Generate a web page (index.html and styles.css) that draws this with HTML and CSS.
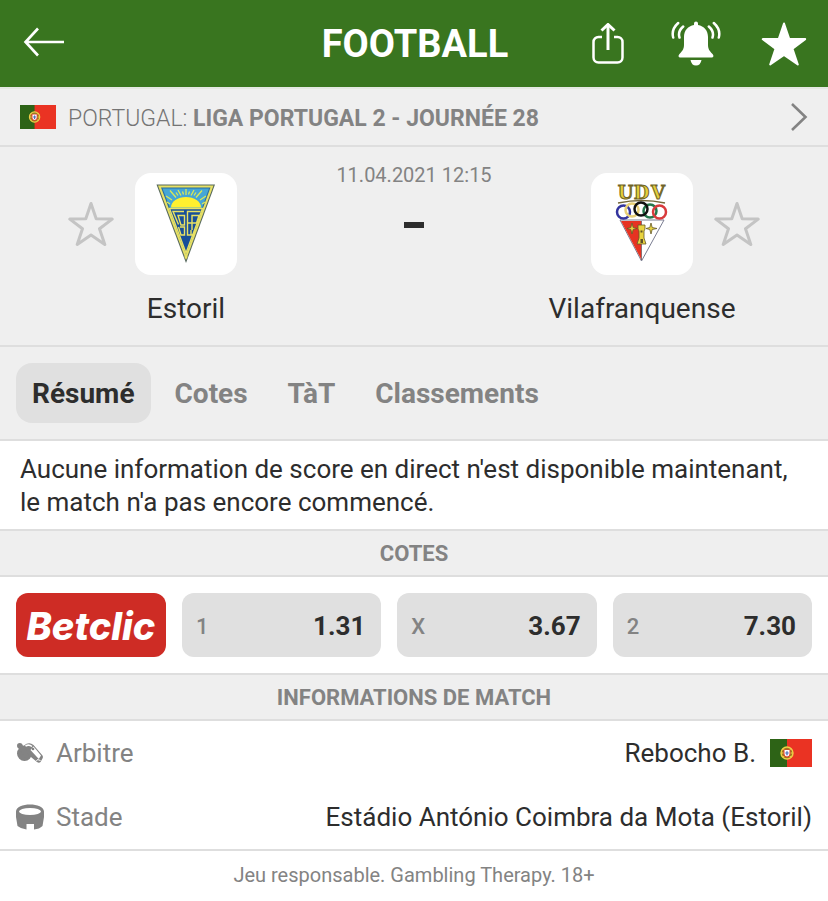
FILE: index.html
```html
<!DOCTYPE html>
<html lang="fr">
<head>
<meta charset="utf-8">
<meta name="viewport" content="width=device-width, initial-scale=1">
<title>Estoril - Vilafranquense</title>
<link rel="stylesheet" href="styles.css">
</head>
<body>
<svg class="defs" aria-hidden="true">
  <symbol id="flag" viewBox="0 0 42 28">
    <path fill="#ea3323" d="M0 0h42v28H0z"/><path fill="#2d6316" d="M0 0h17v28H0z"/>
    <circle cx="17" cy="14" r="6" fill="#9a7a20" stroke="#f0cf48" stroke-width="1.4"/>
    <path d="M11 14h12M13 10q4 4 8 0M13 18q4-4 8 0" fill="none" stroke="#f0cf48"/>
    <path d="M13.500 10.500h7v4q0 3.500-3.500 4-3.500-.5-3.500-4z" fill="#e33a2a"/>
    <path d="M14.500 11h5v4q0 2-2.500 2.500-2.500-.5-2.500-2.500z" fill="#fff"/>
    <path d="M16.300 12.200h1.400v4h-1.400zM15.200 13.400h3.600v1.200h-3.600z" fill="#5570b8"/>
  </symbol>
  <symbol id="star" viewBox="0 0 46 46">
    <path d="M23 2.500l5.200 15.300 16 .3-12.700 9.700L36.800 43.500 23 34 9.200 43.500l5.300-15.700L1.800 18.100l16-.3z" stroke-linejoin="round"/>
  </symbol>
</svg>

<header class="topbar">
  <div class="topbar-side">
    <button class="icon-button" aria-label="Retour">
      <svg width="42" height="30" viewBox="0 0 42 30" fill="none" stroke="#fff" stroke-width="2.600"><path d="M41 15H2M15 1.500L2.500 15 15 28.500"/></svg>
    </button>
  </div>
  <h1>FOOTBALL</h1>
  <div class="topbar-side actions">
    <button class="icon-button" aria-label="Partager">
      <svg width="32" height="42" viewBox="0 0 32 42" fill="none" stroke="#fff" stroke-width="2.500"><path d="M10 14H6.500a5 5 0 0 0-5 5v15.500a5 5 0 0 0 5 5h19a5 5 0 0 0 5-5V19a5 5 0 0 0-5-5H22"/><path d="M16 27V2" stroke-width="3"/><path d="M9.500 7.500L16 1.500l6.500 6" stroke-width="3"/></svg>
    </button>
    <button class="icon-button" aria-label="Notifications">
      <svg width="50" height="46" viewBox="0 1 50 46" fill="#fff"><path d="M23 3.500a2 2 0 0 1 4 0V5c6 1 10 5.500 10 12v7.500c0 4 1 6 4.500 9.500 1.800 2 .8 3.500-1 3.500h-31c-1.800 0-2.800-1.500-1-3.500 3.500-3.500 4.500-5.500 4.500-9.500V17c0-6.500 4-11 10-12zM19.500 40h11q-1 5.500-5.500 5.500T19.500 40z"/><path d="M7.200 3Q0 9.500 2.200 17.500M12.200 6.500Q6.500 11.500 8.500 17.500M42.800 3Q50 9.500 47.800 17.500M37.800 6.500q5.700 5 3.700 11" fill="none" stroke="#fff" stroke-width="2.500" stroke-linecap="round"/></svg>
    </button>
    <button class="icon-button" aria-label="Favori">
      <svg width="46" height="46" fill="#fff" stroke="#fff" stroke-width="2"><use href="#star"/></svg>
    </button>
  </div>
</header>

<main>
  <a class="league" href="#">
    <svg class="league-flag" aria-label="Portugal"><use href="#flag"/></svg>
    <span class="league-name">PORTUGAL: <strong>LIGA PORTUGAL 2 - JOURNÉE 28</strong></span>
    <svg width="18" height="28" viewBox="0 0 18 28" fill="none" stroke="#838383" stroke-width="2.600"><path d="M2 1l13.500 13L2 27"/></svg>
  </a>

  <section class="match">
    <div class="team">
      <button class="icon-button favourite" aria-label="Suivre Estoril">
        <svg width="46" height="46" fill="none" stroke="#c4c4c4" stroke-width="3"><use href="#star"/></svg>
      </button>
      <div class="badge">
        <svg width="102" height="102" viewBox="0 0 102 102">
          <path d="M21.500 11.500H80L51 90z" fill="#56685c"/>
          <path d="M23 12.500h55.500L51 87z" fill="#e8e164"/>
          <path d="M26 14.500h49.500L51 81.500z" fill="#2b6d9d"/>
          <path d="M27.500 15.500H74L67 35H35z" fill="#45a6d6"/>
          <path d="M36 34.500a15 10.500 0 0 1 30 0z" fill="#fff02f"/>
          <g stroke="#d9e957" stroke-width="1.300"><path d="M51 22v-6M46 22.500l-3-5.500M56 22.500l3-5.500M41 24.500l-6-7M61 24.500l6-7M37 27l-6-4M65 27l6-4M48.500 21.500l-1-3M53.500 21.500l1-3M35 31l-3-2M67 31l3-2M43 22.500l-2-3M59 22.500l2-3"/></g>
          <path d="M34.500 35.500h33L51 80z" fill="#174f99" stroke="#e8e164" stroke-width="1.400"/>
          <path d="M49 38.500H38l5.500 13M43 42.500h6.500V52H46zM45 54h4.500v8h-3.500l-2.500-8M65.500 38.500H52.500V62H58l2.500-5M52.500 50H57M64 42.500h-7V57M57 42.500h7l-2.500 7.500H57M56 57v5" fill="none" stroke="#e8e164" stroke-width="1.400"/>
          <circle cx="51" cy="84" r="1.500" fill="#e8e164"/>
        </svg>
      </div>
      <h2>Estoril</h2>
    </div>

    <div class="score">
      <time datetime="2021-04-11T12:15">11.04.2021 12:15</time>
      <span class="dash" role="img" aria-label="Pas de score"></span>
    </div>

    <div class="team away">
      <div class="badge">
        <svg width="102" height="102" viewBox="0 0 102 102">
          <path d="M29 47h44L50.500 88z" fill="#fff" stroke="#7a7d91"/>
          <path d="M30 48h20v38z" fill="#e63322"/><path d="M50.500 48v39" stroke="#5a3033" stroke-width=".7"/>
          <g class="crest-text" text-anchor="middle"><text x="34.500" y="26">U</text><text x="50.500" y="26">D</text><text x="67" y="26">V</text></g>
          <path d="M27 30q24-5 47 0" fill="none" stroke="#756839" stroke-width="1.500"/>
          <g fill="none" stroke-width="2.500"><circle cx="32.500" cy="39" r="6.500" stroke="#33349e"/><circle cx="41" cy="37" r="6.500" stroke="#e8cf77"/><circle cx="59" cy="38" r="6.500" stroke="#25774c"/><circle cx="68.500" cy="39" r="6.500" stroke="#d83a3c"/><circle cx="50" cy="36" r="6.500" stroke="#111"/></g>
          <g fill="#e8d340" stroke="#65592a" stroke-width=".8"><path d="M47 52h7v4l-1 2v7l2 6h-9l2-6v-7l-1-2z"/><path d="M41 50l1.200 4.500 3.800 1-3.800 1L41 61l-1.200-4.500-3.800-1 3.800-1zM60 50l1.200 4.500 4.800 1-4.800 1L60 61l-1.200-4.500-3.800-1 3.800-1z"/></g>
          <path d="M49.500 66H52v4h-2.500zM49.500 57.500h2v2h-2z" fill="#5d5126"/>
        </svg>
      </div>
      <button class="icon-button favourite" aria-label="Suivre Vilafranquense">
        <svg width="46" height="46" fill="none" stroke="#c4c4c4" stroke-width="3"><use href="#star"/></svg>
      </button>
      <h2>Vilafranquense</h2>
    </div>
  </section>

  <nav class="tabs">
    <a class="tab active" href="#" aria-current="page">Résumé</a>
    <a class="tab" href="#">Cotes</a>
    <a class="tab" href="#">TàT</a>
    <a class="tab" href="#">Classements</a>
  </nav>

  <p class="notice">Aucune information de score en direct n'est disponible maintenant, le match n'a pas encore commencé.</p>

  <h3 class="section-title">COTES</h3>
  <div class="odds">
    <a class="bookmaker" href="#">Betclic</a>
    <button class="odd"><span>1</span><strong>1.31</strong></button>
    <button class="odd"><span>X</span><strong>3.67</strong></button>
    <button class="odd"><span>2</span><strong>7.30</strong></button>
  </div>

  <h3 class="section-title">INFORMATIONS DE MATCH</h3>
  <dl class="info">
    <div class="info-row">
      <dt>
        <svg width="28" height="26" viewBox="0 0 28 26"><g fill="#838383"><circle cx="8.500" cy="13.500" r="7.500"/><circle cx="3.800" cy="5.800" r="2.800"/><path d="M4 4.500L12 7l3 8-4 5L3 9z"/></g><path d="M8 5.500Q13 1.500 17.500 5L26.500 15.500q1 1.500 0 3l-2 3.500q-1.500 1.500-3.500 0L12.500 15z" fill="#838383"/><path d="M17.500 6.500l7.500 9-2.200 3.500L14.500 10z" fill="#fff"/><path d="M9.500 6q3.500-2 6.500.5" fill="none" stroke="#fff" stroke-width="1.500"/><path d="M20.500 21l1-1.500 3 1" fill="none" stroke="#fff"/><circle cx="17" cy="9" r="1.300" fill="#838383"/></svg>
        Arbitre
      </dt>
      <dd>Rebocho B. <svg class="info-flag" aria-label="Portugal"><use href="#flag"/></svg></dd>
    </div>
    <div class="info-row">
      <dt>
        <svg width="28" height="26" viewBox="0 0 28 26"><path d="M0 7.500C0-2 28-2 28 7.500V13l-1.500 9q-3 3-8.500 3.500V20h-7.500v5.500Q5 25 1.500 22L0 13z" fill="#838383"/><ellipse cx="14" cy="7.500" rx="11" ry="3.500" fill="#fff"/></svg>
        Stade
      </dt>
      <dd>Estádio António Coimbra da Mota (Estoril)</dd>
    </div>
  </dl>
</main>

<footer>Jeu responsable. Gambling Therapy. 18+</footer>
</body>
</html>
```
FILE: styles.css
```css
* { box-sizing: border-box; }
body { margin: 0; background: #fff; color: #2d2d2d; font-family: Roboto, "Liberation Sans", sans-serif; }
h1, h2, h3, p, dl, dd { margin: 0; }
a { color: inherit; text-decoration: none; }
svg { display: block; flex: none; }
.defs { position: absolute; width: 0; height: 0; }
.icon-button { padding: 0; border: 0; background: none; cursor: pointer; }

.topbar { display: flex; align-items: center; height: 87px; padding: 0 21px 0 23px; background: #39751f; color: #fff; }
.topbar-side { flex: 1; }
.actions { display: flex; align-items: center; justify-content: flex-end; }
.actions .icon-button + .icon-button { margin-left: 40px; }
.actions .icon-button:nth-child(2) { margin-left: 47px; }
h1 { font-size: 38px; line-height: 48px; font-weight: 700; }

.league { display: flex; align-items: center; gap: 12px; height: 60px; padding: 0 20px; border-top: 2px solid #e4e8e2; border-bottom: 2px solid #dedede; background: #efefef; color: #838383; font-size: 23px; }
.league-flag { width: 36px; height: 24px; }
.league-name { flex: 1; padding-top: 2px; font-weight: 300; color: #747474; }
.league-name strong { font-weight: 700; color: #838383; }

.match { display: flex; justify-content: space-between; height: 200px; padding: 0 68px; background: #efefef; border-bottom: 2px solid #dedede; }
.team { display: grid; grid-template-columns: 46px 102px 46px; column-gap: 21px; align-content: start; align-items: center; padding-top: 26px; }
.away .badge { grid-column: 2; }
.badge { width: 102px; height: 102px; border-radius: 16px; background: #fff; }
.crest-text { font: 700 18px "DejaVu Serif", serif; fill: #e5cf3b; stroke: #6f6328; stroke-width: 1px; }
.team h2 { grid-column: 1 / -1; margin-top: 17px; font-size: 28px; line-height: 34px; font-weight: 400; text-align: center; }
.score { display: flex; flex-direction: column; align-items: center; padding-top: 15px; color: #838383; font-size: 20px; line-height: 26px; }
.dash { width: 20px; height: 6px; margin-top: 34px; background: #2d2d2d; }

.tabs { display: flex; align-items: center; gap: 8px; height: 94px; padding: 0 16px; background: #efefef; border-bottom: 2px solid #dedede; }
.tab { padding: 2px 16px 0; border-radius: 16px; color: #838383; font-size: 28px; line-height: 58px; font-weight: 700; }
.tab.active { background: #e0e0e0; color: #2d2d2d; }

.notice { padding: 12px 20px 10px; font-size: 26px; line-height: 33px; }
.section-title { padding-top: 2px; border-top: 2px solid #dedede; border-bottom: 2px solid #dedede; background: #efefef; color: #838383; font-size: 22px; line-height: 42px; font-weight: 700; text-align: center; }
.odds { display: grid; grid-template-columns: 150px repeat(3, 1fr); gap: 16px; padding: 16px; }
.bookmaker, .odd { display: flex; align-items: center; height: 64px; padding-top: 2px; border-radius: 12px; }
.bookmaker { justify-content: center; background: #ce2c25; color: #fff; font: italic 800 38px Inter, sans-serif; }
.odd { justify-content: space-between; padding: 2px 16px 0 14px; border: 0; background: #e0e0e0; color: #838383; font-family: inherit; font-size: 22px; font-weight: 500; }
.odd strong { color: #2d2d2d; font-size: 26px; font-weight: 700; }

.info { border-bottom: 2px solid #dedede; }
.info-row { display: flex; align-items: center; justify-content: space-between; height: 64px; padding: 0 16px; font-size: 26px; }
dt, dd { display: flex; align-items: center; gap: 12px; }
dt { color: #838383; }
dd { gap: 14px; }
.info-flag { width: 42px; height: 28px; }
footer { padding: 10px 16px; color: #838383; font-size: 20px; line-height: 28px; text-align: center; }
```
